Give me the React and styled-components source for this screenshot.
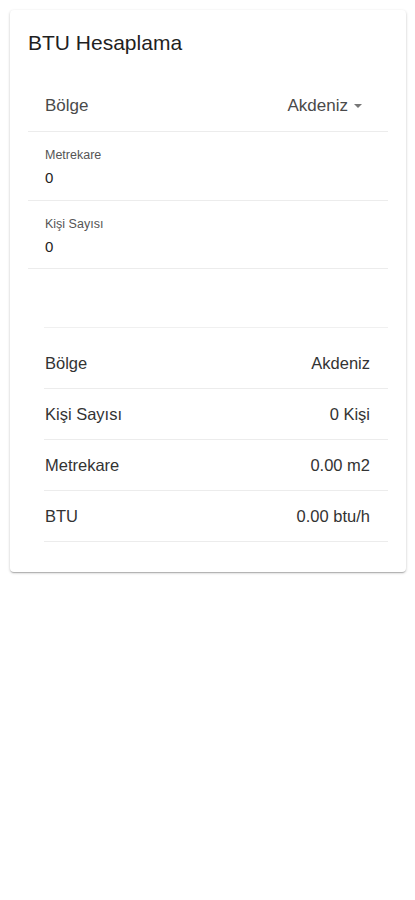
import React from 'react'
import styled, { createGlobalStyle } from 'styled-components'

const GlobalStyle = createGlobalStyle`
    html, body {
        margin: 0;
        padding: 0;
        background-color: #ffffff;
        font-family: "Liberation Sans", Arial, sans-serif;
    }
`

const results = [
    { label: 'Bölge', value: 'Akdeniz' },
    { label: 'Kişi Sayısı', value: '0 Kişi' },
    { label: 'Metrekare', value: '0.00 m2' },
    { label: 'BTU', value: '0.00 btu/h' },
]

export default function App() {
    return (
        <Page>
            <GlobalStyle />
            <Card>
                <Title>BTU Hesaplama</Title>

                <SelectRow>
                    <SelectLabel>Bölge</SelectLabel>
                    <SelectValue>
                        Akdeniz
                        <Caret />
                    </SelectValue>
                </SelectRow>

                <Field tall>
                    <FieldLabel>Metrekare</FieldLabel>
                    <FieldValue>0</FieldValue>
                </Field>

                <Field>
                    <FieldLabel>Kişi Sayısı</FieldLabel>
                    <FieldValue>0</FieldValue>
                </Field>

                <Results>
                    {results.map((row, index) => (
                        <ResultRow key={index} first={index === 0}>
                            <span>{row.label}</span>
                            <span>{row.value}</span>
                        </ResultRow>
                    ))}
                </Results>
            </Card>
        </Page>
    )
}

const Page = styled.div`
    width: 415px;
    min-height: 900px;
    padding: 10px 9px 0 10px;
    box-sizing: border-box;
`

const Card = styled.div`
    display: flex;
    flex-direction: column;
    padding: 18px 18px 30px 18px;
    border-radius: 4px;
    background-color: #ffffff;
    box-shadow: 0px 1px 3px rgba(0, 0, 0, 0.2), 0px 1px 1px rgba(0, 0, 0, 0.12), 0px 2px 1px -1px rgba(0, 0, 0, 0.1);
    box-sizing: border-box;
`

const Title = styled.div`
    font-size: 21px;
    line-height: 30px;
    color: #1f1f1f;
`

const SelectRow = styled.div`
    display: flex;
    align-items: center;
    justify-content: space-between;
    height: 51px;
    margin-top: 22px;
    padding: 0 26px 0 17px;
    border-bottom: 1px solid #ececec;
    font-size: 17px;
    color: #4a4a4a;
`

const SelectLabel = styled.span``

const SelectValue = styled.span`
    display: flex;
    align-items: center;
    gap: 6px;
`

const Caret = styled.span`
    width: 0;
    height: 0;
    border-left: 4px solid transparent;
    border-right: 4px solid transparent;
    border-top: 4px solid #777777;
`

const Field = styled.div`
    display: flex;
    flex-direction: column;
    height: ${props => props.tall ? 69 : 68}px;
    padding: 16px 0 0 17px;
    border-bottom: 1px solid #ececec;
    box-sizing: border-box;
`

const FieldLabel = styled.div`
    font-size: 12.5px;
    line-height: 14px;
    color: #555555;
`

const FieldValue = styled.div`
    margin-top: 7px;
    font-size: 15px;
    line-height: 18px;
    color: #222222;
`

const Results = styled.div`
    display: flex;
    flex-direction: column;
    margin: 58px 0 0 16px;
    border-top: 1px solid #f0f0f0;
`

const ResultRow = styled.div`
    display: flex;
    align-items: center;
    justify-content: space-between;
    height: ${props => props.first ? 61 : 51}px;
    padding: ${props => props.first ? '10px' : '0'} 18px 0 1px;
    border-bottom: 1px solid #ececec;
    box-sizing: border-box;
    font-size: 16.5px;
    color: #333333;
`
